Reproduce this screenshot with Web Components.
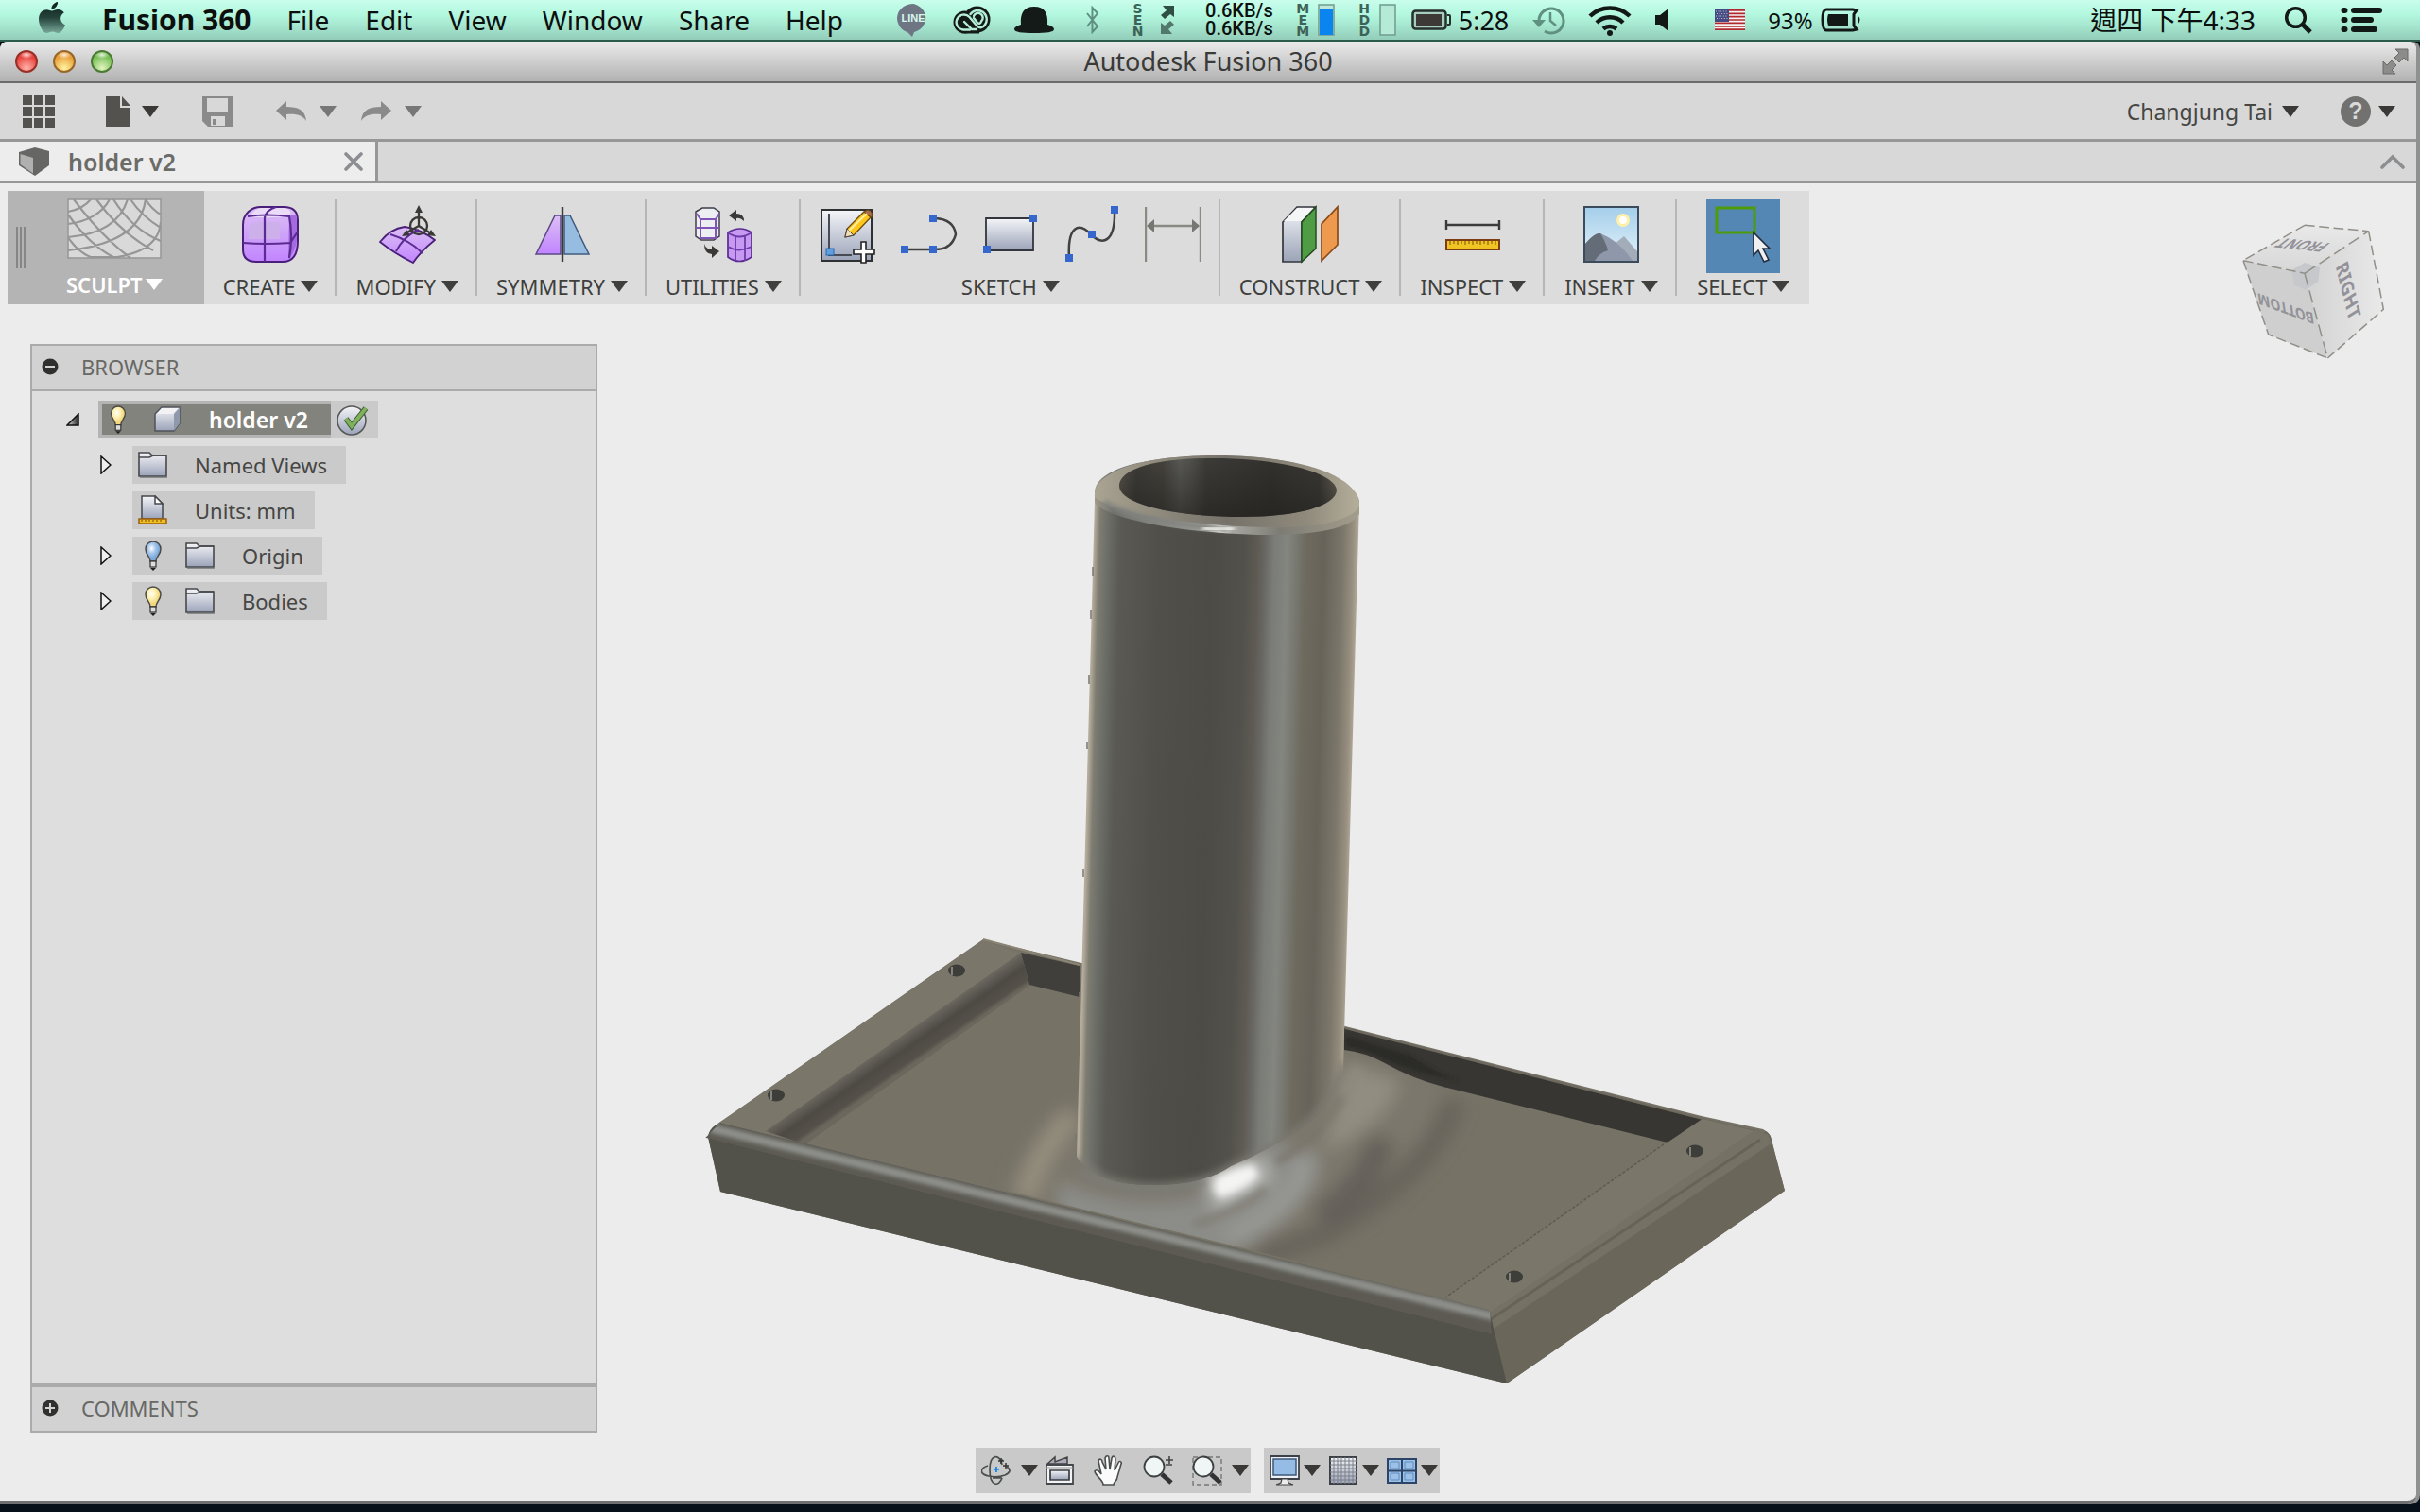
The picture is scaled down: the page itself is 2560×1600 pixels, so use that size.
<!DOCTYPE html>
<html lang="en">
<head>
<meta charset="utf-8">
<title>Autodesk Fusion 360</title>
<style>
  html, body { margin: 0; height: 100%; }
  body {
    display: flex; flex-direction: column; min-height: 100vh; overflow: hidden;
    font-family: "Noto Sans", "Noto Sans CJK TC", sans-serif; font-size: 22px; color: #464644;
    background: #05101a;
  }
</style>
</head>
<body>
<mac-menubar></mac-menubar>
<app-window>
  <title-bar slot="title">Autodesk Fusion 360</title-bar>
  <quick-bar slot="quick"></quick-bar>
  <tab-strip slot="tabs"><doc-tab>holder v2</doc-tab></tab-strip>
  <ribbon-bar slot="ribbon">
    <ribbon-group label="SCULPT" active><ui-icon name="sculpt" w="100" h="64"></ui-icon></ribbon-group>
    <ribbon-group label="CREATE"><ui-icon name="create" w="60" h="64"></ui-icon></ribbon-group>
    <ribbon-group label="MODIFY"><ui-icon name="modify" w="60" h="64"></ui-icon></ribbon-group>
    <ribbon-group label="SYMMETRY"><ui-icon name="symmetry" w="60" h="64"></ui-icon></ribbon-group>
    <ribbon-group label="UTILITIES"><ui-icon name="utilities" w="64" h="64"></ui-icon></ribbon-group>
    <ribbon-group label="SKETCH">
      <ui-icon name="sketch" w="60" h="64"></ui-icon><ui-icon name="arc" w="60" h="64"></ui-icon><ui-icon name="rect" w="60" h="64"></ui-icon><ui-icon name="spline" w="60" h="64"></ui-icon><ui-icon name="dimension" w="60" h="64"></ui-icon>
    </ribbon-group>
    <ribbon-group label="CONSTRUCT"><ui-icon name="construct" w="64" h="64"></ui-icon></ribbon-group>
    <ribbon-group label="INSPECT"><ui-icon name="inspect" w="60" h="64"></ui-icon></ribbon-group>
    <ribbon-group label="INSERT"><ui-icon name="insert" w="60" h="64"></ui-icon></ribbon-group>
    <ribbon-group label="SELECT" tall><ui-icon name="select" w="78" h="78"></ui-icon></ribbon-group>
  </ribbon-bar>
  <view-cube slot="cube"></view-cube>
  <browser-panel slot="panel">
    <tree-node root label="holder v2"></tree-node>
    <tree-node label="Named Views" expandable icons="folder"></tree-node>
    <tree-node label="Units: mm" icons="units"></tree-node>
    <tree-node label="Origin" expandable icons="bulb-off folder"></tree-node>
    <tree-node label="Bodies" expandable icons="bulb folder"></tree-node>
  </browser-panel>
  <model-view slot="model"></model-view>
  <nav-bar slot="nav"></nav-bar>
</app-window>

<script>
const define = (name, css, html) => customElements.define(name, class extends HTMLElement {
  constructor() { super(); this.attachShadow({ mode: 'open' }); }
  connectedCallback() {
    if (this.shadowRoot.childNodes.length) return;
    const markup = typeof html === 'function' ? html(this) : html;
    this.shadowRoot.innerHTML = `<style>:host,*{box-sizing:border-box}button{all:unset;box-sizing:border-box;display:flex;align-items:center;cursor:default}${css}</style>${markup}`;
  }
});

/* Each drawing: [viewBox, markup] */
const steel = '<linearGradient id="s" x2="0" y2="1"><stop stop-color="#f4f5f8"/><stop offset="1" stop-color="#9ba3b8"/></linearGradient>';
const purple = '<linearGradient id="p" x2="0" y2="1"><stop stop-color="#dcc0f4"/><stop offset="1" stop-color="#c184ff"/></linearGradient>';
const bulb = (a, b) => `<radialGradient id="b" cx=".4" cy=".35"><stop stop-color="#fff"/><stop offset=".5" stop-color="${a}"/><stop offset="1" stop-color="${b}"/></radialGradient>
 <path d="M7 22C7 17 2 15 2 9a8 8 0 0 1 16 0c0 6-5 8-5 13z" fill="url(#b)" stroke="#4a4a46" stroke-width="1.5"/><rect x="7" y="22" width="6" height="6" fill="#ddd" stroke="#333" stroke-width="1.2"/><path d="M7 29h6l-3 3z" fill="#222"/>`;
const ICONS = {
  apple: ['0 0 30 36', '<linearGradient id="a" x2="0" y2="1"><stop stop-color="#0c1f1a"/><stop offset=".5" stop-color="#24423a"/><stop offset="1" stop-color="#78a898"/></linearGradient><path fill="url(#a)" d="M21 1c.4 4-3 7.600-6.500 7.500C14 5 17.500 1.500 21 1zM14.800 10.500c2 0 4-1.800 7-1.500 2.500.2 4.600 1.200 6 3.200-5.500 3.500-4.500 10.800 1.200 13.200-1.500 4-4.500 8.600-7.500 8.600-2.500 0-3.300-1.400-6-1.400s-3.700 1.400-6 1.400C5.500 34 1 26 1 19.500 1 12.500 5 9.200 9.300 9.200c2.500 0 4 1.300 5.500 1.300z"/>'],
  line: ['0 0 36 36', '<path fill="#6e7684" d="M18 1a17 15.500 0 0 0-6 30l5 5 2-5A17 15.500 0 0 0 18 1z"/><text x="18" y="20" text-anchor="middle" font-family="Liberation Sans, sans-serif" font-weight="700" font-size="11" fill="#d8f8ea">LINE</text>'],
  cc: ['0 0 40 30', '<circle cx="25.500" cy="14.500" r="14" fill="#141a18"/><circle cx="12.500" cy="17.500" r="12" fill="#141a18"/><path d="M12 29.500h16v-8H12z" fill="#141a18"/><g fill="none" stroke="#b4eed8" stroke-width="2.400" stroke-linecap="round"><path d="M18 25.500h-6a8 8 0 1 1 5.500-13.500l8 9.500q5 4 8.500-1.500a9.500 9.500 0 1 0-15.500-11"/><path d="M22 13l4 5q3 2 4-1.500a5 5 0 1 0-8-5.500M12 17l8 8h5"/></g>'],
  hat: ['0 0 44 30', '<path fill="#141a18" d="M8 20C7 8 11 1 22 1s15 7 14 19c4 1 7 3 7 5 0 3-8 4-21 4S1 28 1 25c0-2 3-4 7-5z"/>'],
  bt: ['0 0 16 30', '<path d="M2 8l11 14-5.500 6V2L13 8 2 22" fill="none" stroke="#5f8f80" stroke-width="2"/>'],
  netarrows: ['0 0 16 34', '<g fill="#2f4f45"><path d="M3 2h12v12l-4-3-6 5-4-4 6-5z"/><path d="M13 32H1V20l4 3 6-5 4 4-6 5z" fill="#50786b"/></g>'],
  mem: ['0 0 18 34', '<rect x="1" y="1" width="16" height="32" fill="#bfe8d8" stroke="#6f9c8e" stroke-width="1.500"/><rect x="2" y="5" width="14" height="28" fill="#0a84ee"/>'],
  hdd: ['0 0 18 34', '<rect x="1" y="1" width="16" height="32" fill="#b4ead6" stroke="#6f9c8e" stroke-width="1.500"/>'],
  bat1: ['0 0 42 22', '<rect x="1.500" y="1.500" width="35" height="19" rx="3" fill="#a6cdbf" stroke="#26302d" stroke-width="2.500"/><rect x="5" y="5" width="27" height="12" fill="#3c3936"/><path d="M38 6h2a1 1 0 0 1 1 1v8a1 1 0 0 1-1 1h-2" fill="none" stroke="#26302d" stroke-width="2"/>'],
  clock: ['0 0 36 32', '<g fill="none" stroke="#5f9080" stroke-width="3"><path d="M8 17A13 13 0 1 1 14 28"/><path d="M20 8v9l6 5" stroke-width="2.500"/></g><path d="M1 16h14l-7 8z" fill="#5f9080"/>'],
  wifi: ['0 0 46 34', '<g fill="none" stroke="#111816" stroke-width="4.500"><path d="M2 13a30 30 0 0 1 42 0"/><path d="M9 20a20 20 0 0 1 28 0"/><path d="M16 26.500a11 11 0 0 1 14 0"/></g><circle cx="23" cy="31" r="3" fill="#111816"/>'],
  speaker: ['0 0 16 26', '<path d="M1 8h5l9-7v24l-9-7H1z" fill="#111816"/>'],
  flag: ['0 0 32 22', '<path fill="#f4f4f4" d="M0 0h32v22H0z"/><path stroke="#b3282d" stroke-width="1.700" d="M0 .9h32M0 4.300h32M0 7.700h32M0 11h32M0 14.400h32M0 17.800h32M0 21.200h32"/><path fill="#454a80" d="M0 0h15v13H0z"/><path stroke="#c4c8e4" stroke-dasharray="1 1.600" d="M1 2h13M2 4.500h12M1 7h13M2 9.500h12"/>'],
  bat2: ['0 0 44 26', '<path d="M8 2h26l4 1-3 4v12l3 4-4 1H6Q2 24 2 13T6 2z" fill="none" stroke="#111816" stroke-width="3"/><path d="M8 7h21v12H8q-2-6 0-12z" fill="#111816"/><path d="M39 8q5 5 0 10z" fill="#111816"/>'],
  search: ['0 0 30 30', '<circle cx="12.500" cy="12.500" r="9.800" fill="none" stroke="#111816" stroke-width="3.500"/><path d="M20 20l8 8" stroke="#111816" stroke-width="5"/>'],
  list: ['0 0 44 28', '<g stroke="#111816" stroke-width="6" stroke-linecap="round"><path d="M3.500 4h1M3.500 14h1M3.500 24h1M14 4h27M14 14h18M14 24h22"/></g>'],
  fullscreen: ['0 0 28 28', '<g fill="#8c8c8a" stroke="#6b6b69"><path d="M14 1h13v13l-4-4-5 5-5-5 5-5z"/><path d="M14 27H1V14l4 4 5-5 5 5-5 5z"/></g>'],
  grid: ['0 0 34 34', '<path fill="#54524f" d="M0 0h10v10H0zM12 0h10v10H12zM24 0h10v10H24zM0 12h10v10H0zM12 12h10v10H12zM24 12h10v10H24zM0 24h10v10H0zM12 24h10v10H12zM24 24h10v10H24z"/>'],
  file: ['0 0 26 32', '<path fill="#54524f" d="M0 0h15v12h11v20H0zM17 0l9 10h-9z"/>'],
  save: ['0 0 32 32', '<path fill="#8a8a8a" fill-rule="evenodd" d="M0 0h32v32H6l-6-6zM5 2v14h22V2zM9 21v10h15V21z"/><path fill="#8a8a8a" d="M11 24h3v6h-3z"/>'],
  undo: ['0 0 32 22', '<path fill="#8a8a8a" d="M0 10L11 0v6c12 0 20 3 21 15-4-6-10-8-21-7v6z"/>'],
  redo: ['0 0 32 22', '<path fill="#8a8a8a" d="M32 10L21 0v6C9 6 1 9 0 21c4-6 10-8 21-7v6z"/>'],
  help: ['0 0 32 32', '<circle cx="16" cy="16" r="16" fill="#71716f"/><text x="16" y="24" text-anchor="middle" font-family="Liberation Sans, sans-serif" font-weight="700" font-size="25" fill="#dadada">?</text>'],
  part: ['0 0 32 30', '<path fill="#666664" d="M0 5L17 0l15 4v15L17 30 0 19z"/><path fill="#b0b0b0" d="M1.500 7L15 11v16.500L1.500 18z"/>'],
  close: ['0 0 20 20', '<path d="M2 2l16 16M18 2L2 18" stroke="#8c8e93" stroke-width="3.600" stroke-linecap="round"/>'],
  chevron: ['0 0 26 16', '<path d="M2 14L13 3l11 11" fill="none" stroke="#8c8e90" stroke-width="3.600" stroke-linecap="round"/>'],
  tri: ['0 0 18 12', '<path fill="currentColor" d="M0 0h18L9 12z"/>'],
  minus: ['0 0 18 18', '<circle cx="9" cy="9" r="8.500" fill="#30302e"/><path d="M4 9h10" stroke="#d2d2d2" stroke-width="2"/>'],
  plus: ['0 0 18 18', '<circle cx="9" cy="9" r="8.500" fill="#30302e"/><path d="M4 9h10M9 4v10" stroke="#d2d2d2" stroke-width="2"/>'],
  open: ['0 0 14 14', '<linearGradient id="o"><stop stop-color="#eee"/><stop offset="1" stop-color="#222"/></linearGradient><path d="M1 13L13 1v12z" fill="url(#o)" stroke="#111" stroke-width="1.500"/>'],
  shut: ['0 0 12 20', '<path d="M1 1l10 9L1 19z" fill="#efefef" stroke="#111" stroke-width="1.500"/>'],
  bulb: ['0 0 20 32', bulb('#fff2b4', '#f3d77c')],
  'bulb-off': ['0 0 20 32', bulb('#a6c8ec', '#7ca7d8')],
  box: ['0 0 28 28', steel + '<path d="M1 8L8 1h19v17l-6 8H1z" fill="url(#s)" stroke="#50535a" stroke-width="1.500"/><path d="M21 8l6-7v17l-6 8z" fill="#9099ac"/><path d="M3 8l5-6h17l-5 6z" fill="#f3f3f5"/>'],
  check: ['0 0 34 34', steel + '<circle cx="16" cy="18" r="15" fill="url(#s)" stroke="#555" stroke-width="1.500"/><path d="M10 16l6 8L31 5" fill="none" stroke="#3f5d34" stroke-width="6"/><path d="M10 16l6 8L31 5" fill="none" stroke="#7fb05a" stroke-width="4"/>'],
  folder: ['0 0 32 28', steel + '<path d="M1 26V1h11l3 3h15v22z" fill="url(#s)" stroke="#46484c" stroke-width="1.600"/><path d="M1 6h11l4-2h14" fill="none" stroke="#46484c" stroke-width="1.600"/><path d="M2 27.500h29" stroke="#8b8b8b"/>'],
  units: ['0 0 32 32', steel + '<path d="M4 25V1h14l8 8v16z" fill="url(#s)" stroke="#46484c" stroke-width="1.500"/><path d="M18 1v8h8z" fill="#fff" stroke="#46484c" stroke-width="1.500"/><path d="M1 25h29v5H1z" fill="#efc020" stroke="#9a5c10" stroke-width="1.500"/><path d="M4 26v2M8 26v2M12 26v2M16 26v2M20 26v2M24 26v2" stroke="#7c4a08"/>'],
  sculpt: ['0 0 100 64', '<rect x="1" y="1" width="98" height="62" fill="#d9d9d9" stroke="#969696" stroke-width="1.500"/><svg x="1" y="1" width="98" height="62" viewBox="0 0 98 62"><g fill="none" stroke="#969696" stroke-width="2.200"><path d="M0 13Q16 10 24 0M0 26Q32 22 44 0M0 40Q52 36 63 0M0 54Q76 46 82 0M52 61Q96 54 98 24M6 0Q36 40 66 62M30 0Q56 36 90 54M48 0Q68 32 98 44M66 0Q78 18 98 30M82 0Q88 10 98 16M0 16Q24 50 50 62M0 40Q10 56 26 62M24 61h30"/></g></svg>'],
  create: ['0 0 60 64', purple + '<path d="M1 22C1 10 10 3 20 3h24q15 0 15 14v22q0 22-16 22H15Q1 61 1 48z" fill="url(#p)" stroke="#4a1f7a" stroke-width="2"/><path d="M50 13q8-5 8 4v22q-2 12-9 19z" fill="#a56ae0"/><path d="M8 13Q14 4 22 4h22q10 2 6 8Q30 16 8 13z" fill="#eadcf8"/><path d="M7 24q3-5 15-5h18v18H7z" fill="#cdb0ea"/><g fill="none" stroke="#5b2b93" stroke-width="2.200"><path d="M6 13q20-3 44 0 4 20 0 44M1 41q24 2 50 0l8-12M24 61V14q2-8 12-11"/></g>'],
  modify: ['0 0 60 64', purple + '<path d="M1 40Q12 26 27 24q16 2 32 14Q44 50 36 62 16 52 1 40z" fill="url(#p)" stroke="#4a1f7a" stroke-width="1.800"/><path d="M12 32q20 6 34 20M42 27Q26 34 18 50" fill="none" stroke="#5b2b93" stroke-width="2"/><g fill="none" stroke="#3a3937" stroke-width="2.300"><circle cx="42" cy="23" r="9"/><path d="M42 8v15l13 8M42 23l-14 8"/></g><path d="M42 1l4 8h-8zM60 34l-9-1 4-6zM24 34l9-1-4-6z" fill="#3a3937"/>'],
  symmetry: ['0 0 60 64', purple + '<path d="M22 12h6v41H2z" fill="url(#p)" stroke="#5c4a86" stroke-width="1.500"/><path d="M32 12h6l20 41H32z" fill="#96bce0" stroke="#405c80" stroke-width="1.500"/><path d="M30 3v58" stroke="#3d3b38" stroke-width="2.400"/>'],
  utilities: ['0 0 64 64', '<path d="M3 8l7-4h12l6 4v26l-6 4H9l-6-4z" fill="#eceef2" stroke="#3e3e48" stroke-width="1.500"/><path d="M8 16h16v20H8zM8 25h16M8 16L4 10M24 16l4-6M3 25h5M24 25h4" fill="none" stroke="#8155b8" stroke-width="2"/><path d="M37 30v26q12 9 25 0V30q-12-8-25 0z" fill="#c79af2" stroke="#5b2b93" stroke-width="1.700"/><path d="M37 30q12 9 25 0M37 45q12 7 25 0M45 33v27M55 33v27" fill="none" stroke="#6d3bab" stroke-width="1.800"/><path d="M38 12l8-6v4q8 0 8 8-4-4-8-3v3zM28 50l-8-6v4q-6 0-8-6 0 11 8 11v4z" fill="#3a3937"/>'],
  sketch: ['0 0 60 64', steel + '<rect x="2" y="6" width="53" height="54" fill="url(#s)" stroke="#2e3034" stroke-width="2"/><path d="M10 10v44h24" fill="none" stroke="#474b55" stroke-width="2"/><rect x="7" y="47" width="8" height="7" fill="#5f9fe0" stroke="#2768b0"/><path d="M27 35l2-9 18-18 7 6-18 19z" fill="#ffc61c" stroke="#6b4a10" stroke-width="1.300"/><path d="M47 8l4-2q6 2 4 8z" fill="#b06a48" stroke="#6b4a10"/><path d="M27 35l2-9 7 7z" fill="#f2ddb8" stroke="#444"/><path d="M31 28L50 10" stroke="#fff0a0" stroke-width="2"/><path d="M44 40h5v8h9v5h-9v9h-5v-9h-8v-5h8z" fill="#fff" stroke="#222" stroke-width="1.600"/>'],
  arc: ['0 0 60 64', '<path d="M4 48h32q18 0 22-16-2-16-22-17" fill="none" stroke="#414141" stroke-width="2.500"/><path fill="#3567cd" d="M0 44h8v8H0zM30 44h8v8h-8zM30 11h8v8h-8z"/>'],
  rect: ['0 0 60 64', steel + '<path d="M4 15h50v34H4z" fill="url(#s)" stroke="#33363c" stroke-width="1.800"/><path fill="#3567cd" d="M50 11h8v8h-8zM1 44h8v8H1z"/>'],
  spline: ['0 0 60 64', '<path d="M6 56C4 24 16 18 29 32c14 14 26 6 25-26" fill="none" stroke="#414141" stroke-width="2.500"/><path fill="#3567cd" d="M2 53h8v8H2zM26 28h8v8h-8zM50 2h8v8h-8z"/>'],
  dimension: ['0 0 60 64', '<path d="M1 3v58M59 3v58M3 23h54" stroke="#8a8a85" stroke-width="2.400"/><path d="M2 23l8-7v14zM58 23l-8-7v14z" fill="#777772"/>'],
  construct: ['0 0 64 64', steel + '<path d="M2 19L17 3h19L22 19v42H2z" fill="url(#s)" stroke="#33363c" stroke-width="1.700"/><path d="M3 18L17 4h18L21 18z" fill="#f5f6f6"/><path d="M22 19L37 3v44L22 61z" fill="#4f9c44" stroke="#244c20" stroke-width="1.500"/><path d="M43 21L60 3v40L43 60z" fill="#ee9a4e" stroke="#8a4a18" stroke-width="1.700"/>'],
  inspect: ['0 0 60 64', '<path d="M2 17v10M58 17v10M2 22h56" stroke="#3b3b3b" stroke-width="2.400"/><path d="M2 38h56v10H2z" fill="#f0c422" stroke="#7c3c14" stroke-width="2"/><path d="M6 39v4M10 39v3M14 39v4M18 39v3M22 39v4M26 39v3M30 39v4M34 39v3M38 39v4M42 39v3M46 39v4M50 39v3M54 39v4" stroke="#77500c"/>'],
  insert: ['0 0 60 64', '<linearGradient id="k" x2="0" y2="1"><stop stop-color="#a4ceea"/><stop offset="1" stop-color="#e4f3fa"/></linearGradient><path d="M2 3h57v58H2z" fill="url(#k)" stroke="#3c4b5c" stroke-width="2"/><circle cx="43" cy="17" r="7" fill="#fff0a8"/><circle cx="43" cy="17" r="4" fill="#fff"/><path d="M34 42l10-8 14 16v10H34z" fill="#a3adb9"/><path d="M3 42q10-12 16-11 20 8 34 29H3z" fill="#8f97aa"/><path d="M3 42q10-12 16-11 6 10 8 18-10 3-14 11H3z" fill="#646c78"/>'],
  select: ['0 0 78 78', steel + '<path d="M0 0h78v78H0z" fill="#5587b5"/><path d="M11 9h40v26H11z" fill="none" stroke="#4f9b0c" stroke-width="3"/><path d="M50 35l17 17h-7l6 12-5 2-6-12-5 5z" fill="#f0f0f2" stroke="#222c3c" stroke-width="1.600"/>'],
  orbit: ['0 0 32 32', '<g fill="none" stroke="#4a4f4d" stroke-width="1.700"><path d="M22 10C20-2 9-2 9 15c0 19 10 18 13 9"/><path d="M7 11C-2 14-2 20 8 22q9 2 17-1 9-4 2-9M20 6l3-1M12 24h10"/></g><path d="M16 12v6M13 15h6" stroke="#0a84ee" stroke-width="1.700"/><path d="M21 3v6M18 6h6M26 8v6M23 11h6" stroke="#333" stroke-width="1.500"/>'],
  lookat: ['0 0 32 32', steel + '<path d="M3 9l8-7v5l13-5v7z" fill="#aab" stroke="#444" stroke-width="1.500"/><path d="M2 10h28v20H2z" fill="#f2f3f4" stroke="#44484c" stroke-width="1.800"/><path d="M2 13h28" stroke="#999"/><path d="M6 16h20v10H6z" fill="url(#s)" stroke="#3a3d40" stroke-width="1.700"/>'],
  hand: ['0 0 32 32', '<path d="M10 31c0-5-8-9-9-14 2-3 5 0 7 3L5 6c1-3 4-2 4 1l4 8-1-12c1-3 4-3 4 0l1 12 2-12c1-3 4-2 4 1l-1 12 4-8c1-3 4-1 3 1l-4 14c0 4-4 5-4 8z" fill="#fbfbfb" stroke="#4a4f4d" stroke-width="1.600"/>'],
  zoom: ['0 0 32 32', '<path d="M20 20l10 9" stroke="#333" stroke-width="5"/><circle cx="12" cy="12" r="10.500" fill="#f0f5f5" stroke="#3c4040" stroke-width="1.800"/><path d="M28 1v8M24 5h8M24 10h7" stroke="#444" stroke-width="1.600"/>'],
  zoomwin: ['0 0 32 32', '<path d="M1 2h30v29H1z" fill="none" stroke="#777" stroke-width="1.400" stroke-dasharray="5 3"/><path d="M20 20l10 9" stroke="#333" stroke-width="5"/><circle cx="12" cy="12" r="10.500" fill="#f0f5f5" stroke="#3c4040" stroke-width="1.800"/>'],
  monitor: ['0 0 32 32', '<path d="M1 1h30v24H1z" fill="#eceff4" stroke="#3c4048" stroke-width="1.800"/><path d="M4 4h24v17H4z" fill="#94bce4" stroke="#3c5878" stroke-width="1.500"/><path d="M13 25h6l1 4 5 2H7l5-2z" fill="#eee" stroke="#444" stroke-width="1.200"/>'],
  gridview: ['0 0 32 32', steel + '<path d="M2 2h28v28H2z" fill="url(#s)" stroke="#3c3f44" stroke-width="2"/><path d="M6 2v28M10 2v28M14 2v28M18 2v28M22 2v28M26 2v28M2 6h28M2 10h28M2 14h28M2 18h28M2 22h28M2 26h28" stroke="#7c8088"/>'],
  panes: ['0 0 32 32', '<path d="M1 4h30v25H1z" fill="#9cc0e6" stroke="#2c4468" stroke-width="2"/><path d="M16 4v25M1 16.500h30" stroke="#2c4468" stroke-width="2"/><path d="M4 7h9v7H4zM19 7h9v7h-9zM4 19h9v7H4zM19 19h9v7h-9z" fill="none" stroke="#5d8cc0"/>'],
};
const ico = (name, w, h) => `<ui-icon name="${name}" w="${w}" h="${h}"></ui-icon>`;
const tri = ico('tri', 18, 12);

define('ui-icon', ':host{display:block;flex:none}svg{display:block}', el => {
  const [box, body] = ICONS[el.getAttribute('name')];
  return `<svg width="${el.getAttribute('w')}" height="${el.getAttribute('h')}" viewBox="${box}" aria-hidden="true">${body}</svg>`;
});

define('mac-menubar', `
  :host{display:flex;align-items:center;height:44px;flex:none;padding:0 40px;color:#0b0f0e;font-size:28px;
    background:linear-gradient(#c9fdec,#b4f8e0 35%,#a5e6cf 65%,#93cdb9);border-bottom:2px solid #2b5c4b}
  nav,.status,.right{display:flex;align-items:center}
  nav{gap:38px;line-height:40px} nav .app{font-weight:700;font-size:30px}
  nav ui-icon{margin-bottom:4px}
  .status{gap:24px;margin-left:56px} .right{gap:30px;margin-left:auto;line-height:40px}
  .grp{display:flex;align-items:center;gap:8px} .wide{padding:0 8px}
  .v{display:flex;flex-direction:column;align-items:center;width:15px;font:bold 14px/12px "DejaVu Sans",sans-serif;color:#3c6357}
  .kb{display:flex;flex-direction:column;font:500 20px/19px Roboto,sans-serif;padding-left:8px}
  .t{font-size:27px}.p{font-size:24px}.d{font-size:28px}
  .pull{margin-left:-8px}.push{margin-left:24px}.net{gap:16px}`,
  `<nav>${ico('apple',30,36)}${['Fusion 360','File','Edit','View','Window','Share','Help'].map((t, i) => `<button class="${i ? '' : 'app'}">${t}</button>`).join('')}</nav>
  <div class="status">${ico('line',36,36)}${ico('cc',40,30)}${ico('hat',44,30)}<span class="wide">${ico('bt',16,30)}</span>
   <div class="grp net"><div class="v"><span>S</span><span>E</span><span>N</span></div>${ico('netarrows',16,34)}</div>
   <div class="kb"><span>0.6KB/s</span><span>0.6KB/s</span></div>
   <div class="grp"><div class="v"><span>M</span><span>E</span><span>M</span></div>${ico('mem',18,34)}</div>
   <div class="grp"><div class="v"><span>H</span><span>D</span><span>D</span></div>${ico('hdd',18,34)}</div>
   <div class="grp pull">${ico('bat1',42,22)}<span class="t">5:28</span></div>
   ${ico('clock',36,32)}${ico('wifi',46,34)}${ico('speaker',16,26)}<span class="push">${ico('flag',32,22)}</span>
   <div class="grp"><span class="p">93%</span>${ico('bat2',44,26)}</div></div>
  <div class="right"><span class="d">週四 下午4:33</span>${ico('search',30,30)}${ico('list',44,28)}</div>`);

define('app-window', `
  :host{display:flex;flex-direction:column;flex:1;margin:0 4px 8px 0;background:#ececec;border-bottom:4px solid #6f7072;border-radius:8px 8px 10px 0;
    box-shadow:4px 0 0 #8f9090}
  main{flex:1;display:grid;grid-template-columns:600px 1fr 160px;grid-template-rows:120px 1fr 48px;
    grid-template-areas:"ribbon ribbon cube" "panel model cube" "nav nav nav";padding:8px 28px 8px 8px}
  slot{display:contents}
  ::slotted([slot=ribbon]){grid-area:ribbon;justify-self:start}
  ::slotted([slot=cube]){grid-area:cube;margin-top:32px;align-self:start}
  ::slotted([slot=panel]){grid-area:panel;margin:42px 0 16px 24px;width:600px}
  ::slotted([slot=model]){grid-area:model;align-self:center;margin:26px 0 0 112px;justify-self:start}
  ::slotted([slot=nav]){grid-area:nav;justify-self:center;margin-left:18px}`,
  `<slot name="title"></slot><slot name="quick"></slot><slot name="tabs"></slot>
   <main><slot name="ribbon"></slot><slot name="cube"></slot><slot name="panel"></slot><slot name="model"></slot><slot name="nav"></slot></main>`);

define('title-bar', `
  :host{display:grid;grid-template-columns:1fr auto 1fr;align-items:center;height:44px;padding:0 8px;font-size:27px;line-height:40px;color:#3a3a38;
    background:linear-gradient(#eaeaea,#b2b2b2);border-bottom:2px solid #6c6c6c;border-radius:8px 8px 0 0}
  .lights{display:flex;gap:16px;padding-left:8px}
  .lights button{width:24px;height:24px;border-radius:50%;border:2px solid var(--e);background:radial-gradient(ellipse 7px 4px at 50% 15%,#fffc,#fff0),radial-gradient(circle at 50% 85%,var(--h),var(--c) 65%)}
  ui-icon{justify-self:end}`,
  `<div class="lights"><button aria-label="Close" style="--e:#983028;--c:#e8433d;--h:#ffb4ac"></button><button aria-label="Minimise" style="--e:#97662a;--c:#e9a13a;--h:#fff3a0"></button><button aria-label="Zoom" style="--e:#4b7a34;--c:#79bf57;--h:#e2f5c0"></button></div>
   <span><slot></slot></span>${ico('fullscreen',28,28)}`);

define('quick-bar', `
  :host{display:flex;align-items:center;justify-content:space-between;height:62px;padding:0 22px 0 24px;background:#d8d8d8;border-bottom:3px solid #979797;color:#3a3937}
  div{display:flex;align-items:center} button{gap:12px}
  .l{gap:46px} .l .wide{margin-left:8px} .e{display:flex;gap:26px} .e button{gap:14px;color:#777}
  .r{gap:44px}.r button{gap:10px}.name{color:#464644;font-size:23px}
  .r .h{gap:8px}`,
  `<div class="l"><button aria-label="Data panel">${ico('grid',34,34)}</button><button class="wide" aria-label="File">${ico('file',26,32)}${tri}</button>
    <button aria-label="Save">${ico('save',32,32)}</button><div class="e"><button aria-label="Undo">${ico('undo',32,22)}${tri}</button><button aria-label="Redo">${ico('redo',32,22)}${tri}</button></div></div>
   <div class="r"><button><span class="name">Changjung Tai</span>${tri}</button><button class="h" aria-label="Help">${ico('help',32,32)}${tri}</button></div>`);

define('tab-strip', `
  :host{display:flex;align-items:center;justify-content:space-between;height:44px;padding-right:12px;background:#d8d8d8;border-bottom:2px solid #979797}`,
  `<slot></slot><button aria-label="Collapse">${ico('chevron',26,16)}</button>`);

define('doc-tab', `
  :host{display:flex;align-items:center;width:400px;height:42px;padding:0 13px 0 20px;background:#ededed;border-right:3px solid #979797;font-weight:600;font-size:25px;line-height:32px;color:#6b6b67}
  span{margin:0 auto 0 20px}`,
  `${ico('part',32,30)}<span><slot></slot></span><button aria-label="Close tab">${ico('close',20,20)}</button>`);

define('ribbon-bar', `
  :host{display:flex;height:120px;background:#dcdcdc;color:#3f3f3d}`, `<slot></slot>`);

define('ribbon-group', `
  :host{display:flex;flex-direction:column;align-items:center;position:relative;min-width:140px;padding:14px 20px 0;font-size:22px}
  :host(:not([active]):not(:last-child))::after{content:"";position:absolute;right:0;top:9px;height:102px;width:2px;background:#b6b6b6}
  :host([active]){background:#b4b4b4;color:#fff;padding:8px 44px 0 62px}
  .tools{display:flex;gap:26px;height:64px}
  :host([tall]){padding-top:9px} :host([tall]) .tools{height:78px}
  button{gap:6px;height:30px;margin-top:8px}
  :host([tall]) button{margin-top:-1px}
  :host([active]) button{font-weight:600;gap:3px;margin-top:12px}
  i{position:absolute;left:9px;top:38px;width:10px;height:44px;border:2px solid #868686;border-width:0 2px;background:linear-gradient(#868686,#868686) center/2px 100% no-repeat}
  :host(:not([active])) i{display:none}`,
  el => `<i></i><div class="tools"><slot></slot></div><button>${el.getAttribute('label')}${tri}</button>`);

define('browser-panel', `
  :host{display:flex;flex-direction:column;border:2px solid #ababab;background:#dedede}
  header,footer{display:flex;align-items:center;gap:24px;height:48px;padding:0 10px 2px;background:#d2d2d2;color:#686865}
  header{border-bottom:2px solid #ababab} footer{border-top:4px solid #ababab;height:50px}
  .tree{flex:1;display:flex;flex-direction:column;align-items:flex-start;gap:8px;padding:10px 0 0 30px}`,
  `<header><button aria-label="Collapse">${ico('minus',18,18)}</button>BROWSER</header><div class="tree"><slot></slot></div>
   <footer><button aria-label="Expand">${ico('plus',18,18)}</button>COMMENTS</footer>`);

define('tree-node', `
  :host{display:flex;align-items:center;height:40px;margin-left:40px}
  :host([root]){margin-left:4px}
  .x{width:36px;padding-left:2px}
  .row{display:flex;align-items:center;height:40px;padding:0 20px 0 6px;background:#cacaca}
  .row ui-icon{margin-right:28px}.row ui-icon[name^=bulb]{margin:0 24px 0 6px}
  .root{display:flex;height:40px;background:#cacaca}
  .root .main{display:flex;align-items:center;padding:0 24px 0 7px;border:4px solid #b4b4b4;border-right:0;background:#83837e;color:#fff;font-weight:600;font-size:23px;gap:28px}
  .root .main span{margin-left:2px}
  .root button{width:50px;padding-left:6px}`,
  el => {
    const label = el.getAttribute('label');
    if (el.hasAttribute('root')) return `<button class="x" aria-label="Collapse">${ico('open',14,14)}</button><div class="root"><div class="main">${ico('bulb',20,30)}${ico('box',28,28)}<span>${label}</span></div><button aria-label="Activate">${ico('check',34,34)}</button></div>`;
    const icons = el.getAttribute('icons').split(' ').map(n => n === 'folder' ? ico(n, 32, 28) : n === 'units' ? ico(n, 32, 32) : ico(n, 20, 32)).join('');
    return (el.hasAttribute('expandable') ? `<button class="x" aria-label="Expand">${ico('shut',12,20)}</button>` : '<span class="x"></span>') + `<div class="row">${icons}<span>${label}</span></div>`;
  });

define('nav-bar', `
  :host{display:flex;gap:14px;height:48px;color:#3a3937}
  div{display:flex;align-items:center;gap:20px;padding:0 2px 0 6px;background:#c9c9c9}
  button{gap:10px}
  .a button:first-child{margin-right:-13px}.b{gap:8px}.b button{gap:4px}`,
  `<div class="a"><button aria-label="Orbit">${ico('orbit',32,32)}${tri}</button><button aria-label="Look at">${ico('lookat',32,32)}</button><button aria-label="Pan">${ico('hand',32,32)}</button><button aria-label="Zoom">${ico('zoom',32,32)}</button><button aria-label="Zoom window">${ico('zoomwin',32,32)}${tri}</button></div>
   <div class="b"><button aria-label="Display">${ico('monitor',32,32)}${tri}</button><button aria-label="Grid">${ico('gridview',32,32)}${tri}</button><button aria-label="Viewports">${ico('panes',32,32)}${tri}</button></div>`);

define('view-cube', `:host{display:block}svg{display:block;overflow:visible}text{font-weight:700;font-family:"Noto Sans",sans-serif}`,
  `<svg width="160" height="150" viewBox="200 130 480 450" role="img" aria-label="View cube">
    <linearGradient id="r"><stop stop-color="#d2d2d2"/><stop offset="1" stop-color="#e9e9e9"/></linearGradient>
    <linearGradient id="t" x2="0" y2="1"><stop stop-color="#e9e9e9"/><stop offset="1" stop-color="#d6d6d6"/></linearGradient>
    <path d="M410 143L613 162 410 296 215 255z" fill="url(#t)"/><path d="M215 255l195 41 73 269-188-75z" fill="#cfcfcf"/><path d="M410 296L613 162l47 248-177 155z" fill="url(#r)"/>
    <path d="M370 285l40-23 48 15-5 45-40 26-37-15z" fill="#c6c8cc"/>
    <g fill="none" stroke="#918f88" stroke-width="4.500"><path stroke-dasharray="32 14" d="M410 143L613 162M410 143L215 255M215 255l195 41M215 255l80 235 188 75M613 162l47 248-177 155"/><path stroke-dasharray="40 16" d="M410 296l73 269M410 296L613 162"/></g>
    <g fill="#929298" text-anchor="middle">
      <text font-size="44" transform="translate(420 192) rotate(186) skewX(-45)">FRONT</text>
      <text font-size="44" transform="translate(348 390) rotate(200) skewX(28)">BOTTOM</text>
      <text font-size="58" transform="translate(530 362) rotate(76) skewX(18)">RIGHT</text>
    </g></svg>`);

define('model-view', `:host{display:block}svg{display:block}`,
  `<svg width="1200" height="1060" viewBox="720 410 1200 1060" role="img" aria-label="Holder model">
  <defs>
    <linearGradient id="tube" gradientUnits="userSpaceOnUse" x1="1172" y1="0" x2="1452" y2="0" gradientTransform="skewX(-1.460)">
      <stop stop-color="#b4ab9b"/><stop offset=".02" stop-color="#7f7d72"/><stop offset=".05" stop-color="#6c6e68"/><stop offset=".1" stop-color="#5a5953"/><stop offset=".25" stop-color="#504f49"/><stop offset=".45" stop-color="#4c4b45"/><stop offset=".57" stop-color="#52514b"/><stop offset=".62" stop-color="#5f5b54"/><stop offset=".65" stop-color="#6a6966"/><stop offset=".68" stop-color="#7a7c77"/><stop offset=".73" stop-color="#83857f"/><stop offset=".78" stop-color="#73736a"/><stop offset=".8" stop-color="#6e6a5e"/><stop offset=".87" stop-color="#67635a"/><stop offset=".94" stop-color="#7c776b"/><stop offset=".98" stop-color="#989080"/><stop offset="1" stop-color="#b5ab9c"/>
    </linearGradient>
    <linearGradient id="bore"><stop stop-color="#57544c"/><stop offset=".08" stop-color="#3d3b37"/><stop offset=".2" stop-color="#45423d"/><stop offset=".28" stop-color="#585855"/><stop offset=".33" stop-color="#4f4f4c"/><stop offset=".4" stop-color="#3c3b37"/><stop offset=".7" stop-color="#33312e"/><stop offset=".92" stop-color="#3b3936"/><stop offset="1" stop-color="#666257"/></linearGradient>
    <linearGradient id="shade" x2="0" y2="1"><stop stop-color="#201e1a" stop-opacity="0"/><stop offset="1" stop-color="#201e1a" stop-opacity=".6"/></linearGradient>
    <linearGradient id="rim"><stop stop-color="#aaa493"/><stop offset=".15" stop-color="#989383"/><stop offset=".5" stop-color="#76726a"/><stop offset=".8" stop-color="#8f8a7b"/><stop offset="1" stop-color="#b5ae9b"/></linearGradient>
    <linearGradient id="lip"><stop stop-color="#a19a8b"/><stop offset=".07" stop-color="#70716d"/><stop offset=".3" stop-color="#8b8c89"/><stop offset=".42" stop-color="#a4a5a2"/><stop offset=".47" stop-color="#f0f0ee"/><stop offset=".52" stop-color="#a7a6a0"/><stop offset=".7" stop-color="#7d7c74"/><stop offset="1" stop-color="#a39d8c"/></linearGradient>
    <linearGradient id="wall" gradientUnits="userSpaceOnUse" x1="945" y1="1102" x2="963" y2="1128"><stop stop-color="#6b6860"/><stop offset=".45" stop-color="#4d4944"/><stop offset=".85" stop-color="#55514a"/><stop offset="1" stop-color="#6b675d"/></linearGradient>
    <filter id="b4" x="-50%" y="-50%" width="200%" height="200%"><feGaussianBlur stdDeviation="4"/></filter>
    <filter id="b9" x="-50%" y="-50%" width="200%" height="200%"><feGaussianBlur stdDeviation="9"/></filter>
    <filter id="b2" x="-50%" y="-50%" width="200%" height="200%"><feGaussianBlur stdDeviation="2"/></filter>
    <clipPath id="floor"><path d="M1089 1042l53 12V1118l280-9 33 9 76 33 233 57-234 165L851 1208z"/></clipPath>
    <clipPath id="front"><path d="M762 1188l814 198 2 26-832-208z"/></clipPath>
    <clipPath id="tubeclip"><path d="M1158 530L1139 1224Q1160 1254 1217 1254T1302 1234Q1345 1216 1378 1193 1412 1168 1421 1130L1438 530z"/></clipPath>
  </defs>
  <path d="M1040 994L758 1190q-8 5-9 13l13 58 832 203 294-204-15-57q-2-5-8-8l-65-14-377-95z" fill="#767266"/>
  <path d="M1040 995L758 1190l52 12 270-193z" fill="#7a766a"/>
  <path d="M1080 1008L810 1197l42 14 237-168z" fill="url(#wall)"/>
  <path d="M1080 1008l62 14v33l-53-13z" fill="#413f3b"/><path d="M1040 994l102 27" stroke="#8a8474" stroke-width="2"/>
  <g clip-path="url(#floor)">
    <g filter="url(#b9)">
      <path d="M1424 1112Q1480 1125 1530 1150 1515 1230 1400 1290 1330 1330 1270 1330L1060 1268Q1090 1190 1140 1170z" fill="#7b776c"/>
      <path d="M1538 1165Q1515 1240 1400 1305l-70 25" fill="none" stroke="#68645b" stroke-width="24"/>
      <path d="M1134 1180Q1100 1215 1084 1268" fill="none" stroke="#968f7f" stroke-width="22"/>
      <path d="M1424 1125l56 18q-6 44-80 76z" fill="#918d80"/>
      <path d="M1462 1205Q1450 1250 1396 1290" fill="none" stroke="#65615a" stroke-width="30"/>
      <path d="M1120 1250Q1200 1290 1290 1262L1345 1205 1395 1235Q1380 1290 1290 1330L1120 1290z" fill="#8c8d89"/>
      <path d="M1380 1220Q1390 1265 1300 1312" fill="none" stroke="#979894" stroke-width="22"/>
      <path d="M1270 1240l66-18 10 26-60 34z" fill="#b4b5b1"/>
    </g>
    <g filter="url(#b4)">
      <path d="M1262 1296Q1312 1282 1340 1258" fill="none" stroke="#827e76" stroke-width="8"/>
      <path d="M1400 1190Q1428 1165 1436 1130" fill="none" stroke="#8e8a7d" stroke-width="8"/>
      <path d="M1350 1230Q1400 1200 1420 1160" fill="none" stroke="#7a756b" stroke-width="7"/>
      <path d="M1142 1240Q1205 1272 1275 1250" fill="none" stroke="#7b7c78" stroke-width="8"/>
      <path d="M1286 1246q20-12 40-14l6 12q-14 16-42 24-10-10-4-22z" fill="#f4f4f3"/>
    </g>
  </g>
  <path d="M1422 1088L1801 1184l-37 25-233-58q-34-8-66-26-22-12-43-14z" fill="#373632"/>
  <path d="M1424 1096q30 10 66 20 24 16 54 28-46-8-80-24-20-10-40-13z" fill="#2b2a26" filter="url(#b2)"/>
  <path d="M1423 1088l378 96 60 14" fill="none" stroke="#6d695e" stroke-width="2"/>
  <path d="M1801 1184l60 14q8 2 7 6l-292 186-46-17 234-164z" fill="#7a766a"/>
  <path d="M1764 1208l-235 165" stroke="#5f5b51" stroke-width="1.500" stroke-dasharray="3 2"/>
  <path d="M1868 1197q5 3 6 9l14 54-294 204-18-75z" fill="#6a665a"/>
  <path d="M1856 1196l14 4 4 10-294 196-4-17z" fill="#757165"/><path d="M1862 1206l-285 190" stroke="#676358" stroke-width="3"/>
  <path d="M758 1190q-8 5-9 13l13 58 832 203-18-75z" fill="#52514a"/>
  <g clip-path="url(#front)"><path d="M762 1188l814 198 2 26-832-208z" fill="#5c5a53"/><path d="M752 1194l832 200" stroke="#8d8f8a" stroke-width="9" filter="url(#b2)"/></g>
  <g fill="#3d3d39"><ellipse cx="1012" cy="1027" rx="9" ry="6.500"/><ellipse cx="821" cy="1159" rx="9" ry="6.500"/><ellipse cx="1793" cy="1218" rx="9" ry="6.500"/><ellipse cx="1602" cy="1351" rx="9" ry="6.500"/></g>
  <path d="M1007 1023v9M816 1155v9M1788 1214v9M1597 1347v9" stroke="#85847c" stroke-width="2"/>
  <path d="M1158 530L1139 1224Q1160 1254 1217 1254T1302 1234Q1345 1216 1378 1193 1412 1168 1421 1130L1438 530z" fill="url(#tube)"/>
  <g clip-path="url(#tubeclip)"><path d="M1139 1226Q1165 1257 1217 1257T1302 1236Q1350 1216 1378 1193 1412 1168 1423 1125" fill="none" stroke="#7b7972" stroke-width="9" filter="url(#b4)"/></g>
  <path d="M1156 600v10M1154 645v10M1152 714v10M1150 785v8M1146 920v8M1142 1050v8M1138 1200v6" stroke="#77756d" stroke-width="1.500"/>
  <path d="M1158 532V520C1160 494 1220 482 1290 482c80 0 142 22 148 48v14c-10 16-50 23-108 22-90-3-160-18-172-34z" fill="url(#lip)"/>
  <path d="M1158 526C1156 498 1210 482 1286 482c80 0 150 18 152 52-2 14-40 26-96 24-90-2-160-14-184-32z" fill="url(#rim)"/>
  <path d="M1168 531q40 22 130 29" fill="none" stroke="#83847f" stroke-width="5" filter="url(#b2)"/>
  <path d="M1272 559q14 2 34 1" stroke="#f4f4f2" stroke-width="5" fill="none" filter="url(#b2)"/>
  <path d="M1184 514c0-18 40-29 98-29 70 0 128 14 132 33 0 17-40 29-100 29-70 0-130-13-130-33z" fill="url(#bore)"/>
  <path d="M1184 514c0-18 40-29 98-29 70 0 128 14 132 33 0 17-40 29-100 29-70 0-130-13-130-33z" fill="url(#shade)"/>
  </svg>`);
</script>
</body>
</html>
